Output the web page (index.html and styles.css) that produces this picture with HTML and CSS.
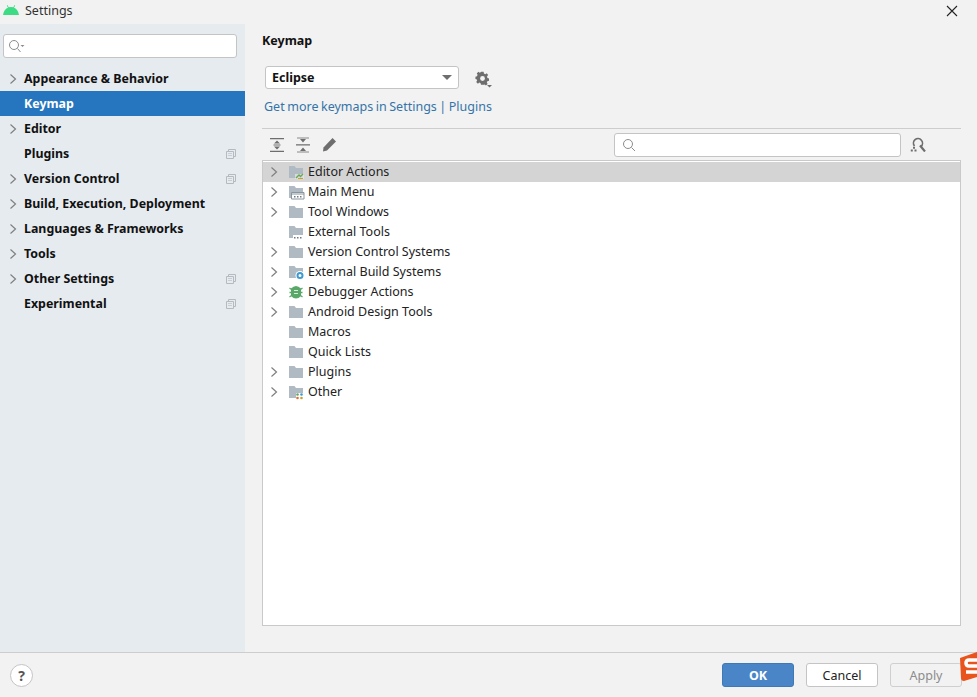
FILE: index.html
```html
<!DOCTYPE html>
<html lang="en">
<head>
<meta charset="utf-8">
<title>Settings</title>
<link rel="stylesheet" href="styles.css">
</head>
<body>
<svg class="defs" width="0" height="0" aria-hidden="true">
  <symbol id="chev" viewBox="0 0 10 12"><path d="M2.500 1.500 7.500 6 2.500 10.500" fill="none" stroke="#7f7f7f" stroke-width="1.200"/></symbol>
  <symbol id="folder" viewBox="0 0 16 14"><path d="M1 1h5.500l1.500 2h7v10H1z" fill="#b0bac2"/></symbol>
  <symbol id="ext" viewBox="0 0 10 10"><path d="M2.500 2.500V.5h7v7h-2" fill="none" stroke="#b4bac0"/><path d="M.5 2.500h7v7h-7z" fill="none" stroke="#b4bac0"/><path d="M2 4.500h4M2 6.500h4" stroke="#c8cdd2"/></symbol>
</svg>
<div class="app">
  <header class="titlebar">
    <svg class="android" width="18" height="10" viewBox="0 0 18 10"><path d="M1 10C1.500 6 4 3.500 6 2.800L4.800 .5l.6-.4L6.700 2.300a7 7 0 0 1 4.600 0L12.600.1l.6.4L12 2.800C14 3.500 16.500 6 17 10z" fill="#3ddc84"/></svg>
    <span class="title">Settings</span>
    <svg class="close" width="12" height="12" viewBox="0 0 12 12"><path d="M1 1l10 10M11 1 1 11" stroke="#222" stroke-width="1.100"/></svg>
  </header>
  <div class="body">
    <aside class="sidebar">
      <div class="side-search">
        <svg width="18" height="14" viewBox="0 0 18 14"><circle cx="6" cy="6" r="4.500" fill="none" stroke="#8c8c8c"/><path d="M9.500 9.500l3 3.500" stroke="#8c8c8c"/><path d="M12.500 6h4l-2 2z" fill="#8c8c8c"/></svg>
      </div>
      <nav class="nav">
        <div class="nav-row"><svg class="nav-chev"><use href="#chev"/></svg><span class="nav-label">Appearance &amp; Behavior</span></div>
        <div class="nav-row selected"><span class="nav-label">Keymap</span></div>
        <div class="nav-row"><svg class="nav-chev"><use href="#chev"/></svg><span class="nav-label">Editor</span></div>
        <div class="nav-row"><span class="nav-label">Plugins</span><svg class="nav-ext"><use href="#ext"/></svg></div>
        <div class="nav-row"><svg class="nav-chev"><use href="#chev"/></svg><span class="nav-label">Version Control</span><svg class="nav-ext"><use href="#ext"/></svg></div>
        <div class="nav-row"><svg class="nav-chev"><use href="#chev"/></svg><span class="nav-label">Build, Execution, Deployment</span></div>
        <div class="nav-row"><svg class="nav-chev"><use href="#chev"/></svg><span class="nav-label">Languages &amp; Frameworks</span></div>
        <div class="nav-row"><svg class="nav-chev"><use href="#chev"/></svg><span class="nav-label">Tools</span></div>
        <div class="nav-row"><svg class="nav-chev"><use href="#chev"/></svg><span class="nav-label">Other Settings</span><svg class="nav-ext"><use href="#ext"/></svg></div>
        <div class="nav-row"><span class="nav-label">Experimental</span><svg class="nav-ext"><use href="#ext"/></svg></div>
      </nav>
    </aside>
    <main class="main">
      <h1 class="heading">Keymap</h1>
      <div class="scheme-row">
        <div class="select"><span class="select-value">Eclipse</span><span class="caret"></span></div>
        <svg class="gear" width="18" height="18" viewBox="0 0 18 18"><path d="M7 1h3l.4 2 1.600.7 1.700-1.100 1.600 2.100-1.300 1.500.4 1.800 1.900.7v2.600l-1.900.6-.7 1.600 1 1.700-2 1.600-1.500-1.200-1.500.6L10 16H7l-.5-1.900-1.500-.6-1.600 1.200-2-2 1.100-1.600-.7-1.600L.5 9.200V6.700l1.800-.6.7-1.700L2 2.800l2-1.900 1.500 1.100 1.100-.6z" fill="#6e6e6e" transform="scale(.86)"/><circle cx="7.500" cy="7.500" r="2.400" fill="#f2f2f2"/><path d="M12 14h5l-2.500 2.500z" fill="#6e6e6e"/></svg>
      </div>
      <a class="link">Get more keymaps in Settings | Plugins</a>
      <div class="toolbar">
        <svg class="tool" width="14" height="16" viewBox="0 0 14 16"><path d="M0 1h14v1.300H0zM0 13.700h14V15H0zM4 6.500h6L7 3.500zM4 9.500h6l-3 3zM3.500 7.500h7v1h-7z" fill="#6e6e6e"/></svg>
        <svg class="tool" width="14" height="16" viewBox="0 0 14 16"><path d="M0 7.300h14v1.300H0zM4 2h6L7 5.500zM4 14h6l-3-3.500z" fill="#6e6e6e"/><path d="M1 1h12M1 15h12" stroke="#6e6e6e" stroke-width=".8"/></svg>
        <svg class="tool" width="15" height="15" viewBox="0 0 15 15"><path d="M10.500 1 14 4.500 5 13.500 1 14.500 1.500 10.500z" fill="#6e6e6e"/></svg>
        <div class="filter">
          <svg width="14" height="14" viewBox="0 0 14 14"><circle cx="6" cy="6" r="4.500" fill="none" stroke="#8c8c8c"/><path d="M9.500 9.500l3.500 3.500" stroke="#8c8c8c"/></svg>
        </div>
        <svg class="find" width="16" height="15" viewBox="0 0 16 15"><path d="M4.500 9A4.500 4.500 0 1 1 11 9.500" fill="none" stroke="#6e6e6e" stroke-width="1.700"/><path d="M10 8.500l5 6" stroke="#6e6e6e" stroke-width="2.200"/><path d="M3 9.800h2v2H3zM.8 12.500h2v2h-2zM4.500 12.500h2v2h-2z" fill="#6e6e6e"/></svg>
      </div>
      <div class="tree">
        <div class="tree-row current"><svg class="tree-chev"><use href="#chev"/></svg>
          <svg class="tree-icon" viewBox="0 0 16 14"><use href="#folder" width="16" height="14"/><path d="M7 9h9v5H7z" fill="#e8e8e8" opacity=".7"/><path d="M8 13l3-3 1.500 1.500L15 9" fill="none" stroke="#6aa84f" stroke-width="1.300"/><path d="M10 13.500h5" stroke="#c9a227"/></svg>
          <span class="tree-label">Editor Actions</span></div>
        <div class="tree-row"><svg class="tree-chev"><use href="#chev"/></svg>
          <svg class="tree-icon" viewBox="0 0 16 14"><use href="#folder" width="16" height="14"/><path d="M3.500 7.500H16V14H3.500z" fill="#fff" stroke="#8a949c"/><path d="M4 9h12" stroke="#8a949c"/><path d="M6 11h1.500v1.500H6zM9 11h1.500v1.500H9zM12 11h1.500v1.500H12z" fill="#6d7a85"/></svg>
          <span class="tree-label">Main Menu</span></div>
        <div class="tree-row"><svg class="tree-chev"><use href="#chev"/></svg><svg class="tree-icon" viewBox="0 0 16 14"><use href="#folder" width="16" height="14"/></svg><span class="tree-label">Tool Windows</span></div>
        <div class="tree-row"><span class="tree-gap"></span>
          <svg class="tree-icon" viewBox="0 0 16 14"><use href="#folder" width="16" height="14"/><path d="M5 10h11v4H5z" fill="#fff"/><path d="M6 12h1.500v1.500H6zM9 12h1.500v1.500H9zM12 12h1.500v1.500H12z" fill="#6d7a85"/></svg>
          <span class="tree-label">External Tools</span></div>
        <div class="tree-row"><svg class="tree-chev"><use href="#chev"/></svg><svg class="tree-icon" viewBox="0 0 16 14"><use href="#folder" width="16" height="14"/></svg><span class="tree-label">Version Control Systems</span></div>
        <div class="tree-row"><svg class="tree-chev"><use href="#chev"/></svg>
          <svg class="tree-icon" viewBox="0 0 16 14"><use href="#folder" width="16" height="14"/><circle cx="12" cy="10.500" r="4.500" fill="#fff"/><circle cx="12" cy="10.500" r="2.500" fill="none" stroke="#3d9ad1" stroke-width="2"/></svg>
          <span class="tree-label">External Build Systems</span></div>
        <div class="tree-row"><svg class="tree-chev"><use href="#chev"/></svg>
          <svg class="tree-icon" viewBox="0 0 16 14"><path d="M3 3.500Q8-1.500 13 3.500V11Q8 16 3 11z" fill="#59a869"/><path d="M1.500 3l2 1.500M14.500 3l-2 1.500M1.500 7.500h2M14.500 7.500h-2M1.500 12l2-1.500M14.500 12l-2-1.500" stroke="#59a869" stroke-width="1.300"/><path d="M6 5.500h4M6 8.500h4" stroke="#d8ecdc" stroke-width="1.200"/></svg>
          <span class="tree-label">Debugger Actions</span></div>
        <div class="tree-row"><svg class="tree-chev"><use href="#chev"/></svg><svg class="tree-icon" viewBox="0 0 16 14"><use href="#folder" width="16" height="14"/></svg><span class="tree-label">Android Design Tools</span></div>
        <div class="tree-row"><span class="tree-gap"></span><svg class="tree-icon" viewBox="0 0 16 14"><use href="#folder" width="16" height="14"/></svg><span class="tree-label">Macros</span></div>
        <div class="tree-row"><span class="tree-gap"></span><svg class="tree-icon" viewBox="0 0 16 14"><use href="#folder" width="16" height="14"/></svg><span class="tree-label">Quick Lists</span></div>
        <div class="tree-row"><svg class="tree-chev"><use href="#chev"/></svg><svg class="tree-icon" viewBox="0 0 16 14"><use href="#folder" width="16" height="14"/></svg><span class="tree-label">Plugins</span></div>
        <div class="tree-row"><svg class="tree-chev"><use href="#chev"/></svg>
          <svg class="tree-icon" viewBox="0 0 16 14"><use href="#folder" width="16" height="14"/><path d="M8 8h8v6H8z" fill="#fff"/><circle cx="9.500" cy="9.500" r="1.300" fill="#59a869"/><circle cx="13.500" cy="9.500" r="1.300" fill="#3d9ad1"/><circle cx="9.500" cy="13" r="1.300" fill="#e0703a"/><circle cx="13.500" cy="13" r="1.300" fill="#c9a227"/></svg>
          <span class="tree-label">Other</span></div>
      </div>
    </main>
  </div>
  <footer class="footer">
    <button class="help">?</button>
    <div class="actions">
      <button class="btn primary">OK</button>
      <button class="btn">Cancel</button>
      <button class="btn disabled">Apply</button>
    </div>
  </footer>
  <svg class="sogou" width="19" height="29" viewBox="0 0 19 29"><path d="M2 6 19 0V25L6 29Q3 29 3 26z" fill="#e8541c"/><path d="M19 8H11Q8 8 8 11T11 14H19M8 20H19" fill="none" stroke="#fff" stroke-width="3.500"/></svg>
</div>
</body>
</html>
```
FILE: styles.css
```css
* { box-sizing: border-box; }
html, body { margin: 0; height: 100%; }
body { font-family: "Noto Sans", "Open Sans", sans-serif; font-size: 13px; color: #1a1a1a; background: #f2f2f2; overflow: hidden; }
.defs { position: absolute; }
.app { position: relative; display: flex; flex-direction: column; width: 977px; height: 697px; overflow: hidden; background: #f2f2f2; }

.titlebar { display: flex; align-items: center; height: 24px; padding: 0 19px 4px 2px; flex: none; }
.android { margin-right: 5px; }
.title { font-size: 12.500px; color: #333; flex: 1; }
.close { margin-top: 1px; }

.body { display: flex; height: 628px; flex: none; }
.sidebar { width: 245px; flex: none; background: #e6ebf0; padding-top: 10px; }
.side-search { display: flex; align-items: center; margin-left: 3px; width: 234px; height: 24px; background: #fff; border: 1px solid #c4c4c4; border-radius: 3px; padding-left: 4px; }
.nav { margin-top: 8px; }
.nav-row { display: flex; align-items: center; height: 25px; padding-left: 24px; position: relative; }
.nav-label { font-weight: 700; font-size: 12.400px; color: #111; flex: 1; }
.nav-chev { position: absolute; left: 8px; top: 7px; width: 10px; height: 12px; }
.nav-ext { width: 10px; height: 10px; margin-right: 9px; flex: none; }
.selected { background: #2675bf; }
.selected .nav-label { color: #fff; }

.main { flex: 1; min-width: 0; padding: 8px 16px 0 17px; }
.heading { margin: 0; font-size: 12.500px; font-weight: 700; line-height: 18px; color: #111; }
.scheme-row { display: flex; align-items: center; margin: 16px 0 0 3px; height: 23px; }
.select { display: flex; align-items: center; justify-content: space-between; width: 194px; height: 23px; background: #fff; border: 1px solid #c4c4c4; border-radius: 3px; padding: 0 6px; }
.select-value { font-weight: 700; font-size: 12.500px; color: #111; }
.caret { width: 0; height: 0; border-left: 5px solid transparent; border-right: 5px solid transparent; border-top: 5px solid #6e6e6e; }
.gear { margin-left: 16px; margin-top: 5px; }
.link { display: block; margin: 8px 0 0 2px; line-height: 20px; color: #3574a8; font-size: 12.500px; word-spacing: -.7px; }
.toolbar { display: flex; align-items: center; height: 32px; margin-top: 11px; border-top: 1px solid #cdcdcd; padding: 0 0 0 8px; }
.tool { margin-right: 12px; flex: none; }
.filter { display: flex; align-items: center; width: 287px; height: 24px; margin-left: 265px; background: #fff; border: 1px solid #c4c4c4; border-radius: 3px; padding-left: 7px; }
.find { margin-left: 9px; flex: none; }
.tree { height: 466px; background: #fff; border: 1px solid #c9c9c9; padding-top: 1px; }
.tree-row { display: flex; align-items: center; height: 20px; padding-left: 6px; font-size: 12.500px; color: #222; }
.current { background: #d4d4d4; }
.tree-chev { width: 10px; height: 12px; flex: none; }
.tree-gap { width: 10px; flex: none; }
.tree-icon { width: 16px; height: 14px; margin: 0 4px 1px 9px; flex: none; overflow: visible; }
.tree-label { margin-bottom: 2px; }

.footer { position: relative; flex: 1; display: flex; align-items: center; justify-content: space-between; border-top: 1px solid #cdcdcd; padding: 0 15px 0 10px; }
.help { width: 23px; height: 23px; border-radius: 50%; border: 1px solid #c4c4c4; background: #fff; font: 700 14px "Noto Sans", sans-serif; color: #555; padding: 0; }
.actions { display: flex; gap: 12px; }
.btn { width: 72px; height: 24px; padding: 0; border: 1px solid #c4c4c4; border-radius: 3px; background: #fff; font: 12.500px "Noto Sans", sans-serif; color: #222; }
.primary { background: #4a86c7; border-color: #3f78b5; color: #fff; font-weight: 700; }
.disabled { background: #f2f2f2; border-color: #cfcfcf; color: #8c8c8c; }
.sogou { position: absolute; right: 0; top: 652px; }
```
